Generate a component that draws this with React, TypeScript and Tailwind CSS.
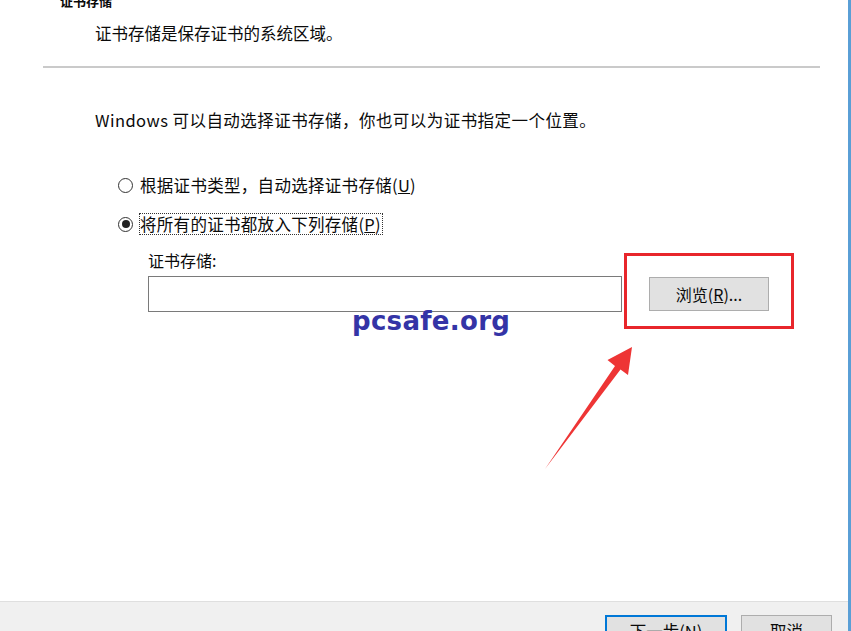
import React from "react";

const font = { fontFamily: '"Microsoft YaHei","Noto Sans CJK SC","Noto Sans",sans-serif' };

function Radio({ checked }: { checked?: boolean }) {
  return (
    <span className="w-[15px] h-[15px] rounded-full border border-[#333] bg-white flex items-center justify-center shrink-0">
      {checked ? <span className="w-[8px] h-[8px] rounded-full bg-[#222]" /> : null}
    </span>
  );
}

export default function App() {
  return (
    <div
      className="w-[851px] h-[631px] relative overflow-hidden bg-white border-r-[3px] border-[#5a9fd6] flex flex-col text-[#0a0a0a]"
      style={font}
    >
      <div className="flex-1 flex flex-col">
        <div className="pl-[60px] -mt-[7px] text-[13px] leading-[16px] font-bold">证书存储</div>
        <div className="pl-[95px] mt-[12px] text-[16.5px] leading-[24px]">证书存储是保存证书的系统区域。</div>
        <div className="ml-[43px] mt-[21px] w-[777px] h-[2px] bg-[#cacaca]" />
        <div className="pl-[95px] mt-[40px] text-[16.5px] leading-[24px] tracking-[0.45px]">
          Windows 可以自动选择证书存储，你也可以为证书指定一个位置。
        </div>
        <div className="pl-[118px] mt-[41px] h-[24px] flex items-center gap-[7px] text-[16.5px]">
          <Radio />
          <span className="leading-[20px] tracking-[0.3px]">
            根据证书类型，自动选择证书存储(<span className="underline">U</span>)
          </span>
        </div>
        <div className="pl-[118px] mt-[15px] h-[24px] flex items-center gap-[6px] text-[16.5px]">
          <Radio checked />
          <span className="leading-[20px] border border-dotted border-[#333] pr-[1px] tracking-[0.3px]">
            将所有的证书都放入下列存储(<span className="underline">P</span>)
          </span>
        </div>
        <div className="pl-[148px] mt-[12px] text-[16px] leading-[24px]">证书存储:</div>
        <div className="pl-[148px] mt-[4px] flex items-center">
          <div className="w-[474px] h-[36px] border border-[#7a7a7a] bg-white" />
          <button className="ml-[27px] w-[120px] h-[34px] border border-[#adadad] bg-[#e1e1e1] text-[16px] leading-[20px] text-[#0a0a0a]">
            浏览(<span className="underline">R</span>)...
          </button>
        </div>
      </div>
      <div className="h-[30px] bg-[#f0f0f0] border-t border-[#dfdfdf] overflow-hidden flex items-start pt-[13px]">
        <button className="ml-[605px] w-[122px] h-[32px] border-2 border-[#0078d7] bg-[#e1e1e1] text-[16.5px] leading-[28px] text-[#0a0a0a]">
          下一步(<span className="underline">N</span>)
        </button>
        <button className="ml-[14px] w-[91px] h-[32px] border border-[#adadad] bg-[#e1e1e1] text-[16.5px] leading-[30px] text-[#0a0a0a]">
          取消
        </button>
      </div>

      {/* annotation overlays */}
      <div className="absolute left-[624px] top-[253px] w-[170px] h-[76px] border-[3px] border-[#e8262b]" />
      <div
        className="absolute left-[352px] top-[304px] text-[26px] leading-[34px] font-bold text-[#3434a6] tracking-[0.3px]"
        style={{ fontFamily: '"DejaVu Sans",Verdana,sans-serif' }}
      >
        pcsafe.org
      </div>
      <svg className="absolute left-0 top-0" width="851" height="631" viewBox="0 0 851 631">
        <polygon
          points="632,347 607.5,360 615,366 545,469 620.5,369.5 628,375"
          fill="#ee3535"
        />
      </svg>
    </div>
  );
}
